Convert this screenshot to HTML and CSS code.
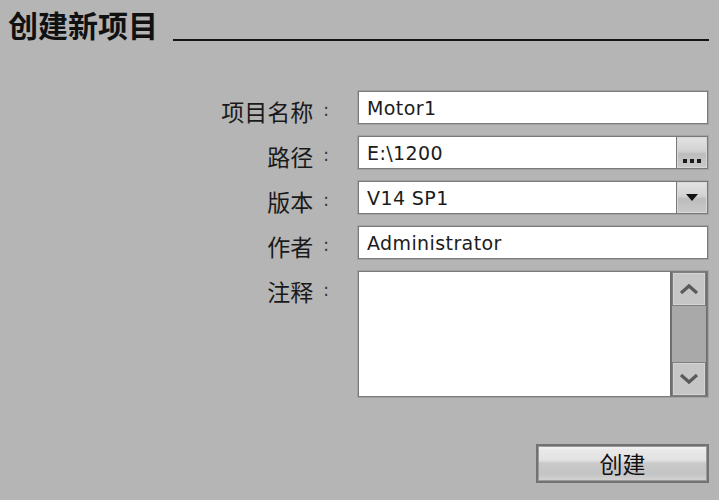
FILE: index.html
```html
<!DOCTYPE html>
<html lang="zh">
<head>
<meta charset="utf-8">
<title>创建新项目</title>
<link rel="stylesheet" href="styles.css">
</head>
<body>
<div class="page">
  <div class="header">
    <h1 class="title">创建新项目</h1>
    <div class="rule"></div>
  </div>
  <div class="form">
    <div class="label">项目名称<span class="colon">:</span></div>
    <div class="field"><span class="value">Motor1</span></div>

    <div class="label">路径<span class="colon">:</span></div>
    <div class="field combo">
      <span class="value">E:\1200</span>
      <span class="side-btn browse"><span class="dots"><i></i><i></i><i></i></span></span>
    </div>

    <div class="label">版本<span class="colon">:</span></div>
    <div class="field combo">
      <span class="value">V14 SP1</span>
      <span class="side-btn drop"><span class="tri"></span></span>
    </div>

    <div class="label">作者<span class="colon">:</span></div>
    <div class="field"><span class="value">Administrator</span></div>

    <div class="label">注释<span class="colon">:</span></div>
    <div class="field memo">
      <div class="memo-text"></div>
      <div class="scrollbar">
        <div class="sb-btn">
          <svg width="20" height="12" viewBox="0 0 20 12"><path d="M2 10 L10 3 L18 10" fill="none" stroke="#5a5a5a" stroke-width="3.2"/></svg>
        </div>
        <div class="sb-track"></div>
        <div class="sb-btn">
          <svg width="20" height="12" viewBox="0 0 20 12"><path d="M2 2 L10 9 L18 2" fill="none" stroke="#5a5a5a" stroke-width="3.2"/></svg>
        </div>
      </div>
    </div>
  </div>
  <div class="actions">
    <button class="create">创建</button>
  </div>
</div>
</body>
</html>
```
FILE: styles.css
```css
html, body {
  margin: 0;
  padding: 0;
  background: #b5b5b5;
}
.page {
  width: 719px;
  height: 500px;
  background: #b5b5b5;
  color: #111;
  font-family: "Noto Sans CJK SC", "DejaVu Sans", sans-serif;
  overflow: hidden;
}
.header {
  display: flex;
  align-items: flex-end;
  padding: 6px 10px 0 8px;
}
.title {
  margin: 0;
  font-size: 30px;
  font-weight: bold;
  line-height: 37px;
  color: #111;
}
.rule {
  flex: 1;
  height: 0;
  border-bottom: 2px solid #141414;
  margin: 0 0 2px 15px;
}
.form {
  display: grid;
  grid-template-columns: 332px 350px;
  grid-template-rows: 33px 33px 33px 33px 126px;
  column-gap: 26px;
  row-gap: 12px;
  margin-top: 48px;
}
.label {
  text-align: right;
  font-size: 23px;
  line-height: 27px;
  padding-top: 6px;
  color: #1a1a1a;
  white-space: nowrap;
}
.colon {
  font-family: "DejaVu Sans", sans-serif;
  font-size: 17px;
  vertical-align: 5px;
  margin: 0 3px 0 10px;
  color: #333;
}
.field {
  box-sizing: border-box;
  height: 33px;
  background: #fff;
  border: 1px solid #7a7a7a;
  box-shadow: 0 0 0 1px #a2a2a2;
  display: flex;
  align-items: center;
  font-family: "DejaVu Sans", sans-serif;
  font-size: 19px;
  letter-spacing: 0.4px;
  color: #1c1c1c;
}
.value {
  flex: 1;
  padding-left: 8px;
  white-space: nowrap;
}
.side-btn {
  align-self: stretch;
  width: 30px;
  border-left: 1px solid #7a7a7a;
  background: linear-gradient(#e4e4e4 0%, #d2d2d2 45%, #bdbdbd 55%, #c9c9c9 100%);
  box-shadow: inset 0 0 0 1px #d8d8d8;
  display: flex;
  justify-content: center;
}
.browse {
  align-items: flex-end;
}
.dots {
  display: flex;
  gap: 3px;
  margin-bottom: 5px;
}
.dots i {
  display: block;
  width: 4px;
  height: 4px;
  background: #1a1a1a;
}
.drop {
  align-items: center;
}
.tri {
  width: 0;
  height: 0;
  border-left: 6px solid transparent;
  border-right: 6px solid transparent;
  border-top: 7px solid #111;
}
.memo {
  height: 126px;
  align-items: stretch;
}
.memo-text {
  flex: 1;
  background: #fff;
}
.scrollbar {
  width: 34px;
  display: flex;
  flex-direction: column;
  background: #a9a9a9;
  border-left: 2px solid #6e6e6e;
  border-right: 1px solid #6e6e6e;
}
.sb-btn {
  box-sizing: border-box;
  height: 34px;
  background: #c6c6c6;
  border: 1px solid #7e7e7e;
  box-shadow: inset 0 0 0 1px #d4d4d4;
  display: flex;
  align-items: center;
  justify-content: center;
}
.sb-track {
  flex: 1;
  background: #a9a9a9;
}
.actions {
  display: flex;
  justify-content: flex-end;
  padding-right: 10px;
  margin-top: 47px;
}
.create {
  box-sizing: border-box;
  width: 173px;
  height: 39px;
  padding: 0;
  font-family: "Noto Sans CJK SC", sans-serif;
  font-size: 23px;
  line-height: 1;
  color: #111;
  border: 2px solid #727272;
  box-shadow: inset 0 0 0 1px #9a9a9a, inset 0 2px 0 1px #f0f0f0;
  background: linear-gradient(#ececec 0%, #e2e2e2 40%, #c9c9c9 50%, #c4c4c4 80%, #d4d4d4 100%);
}
```
